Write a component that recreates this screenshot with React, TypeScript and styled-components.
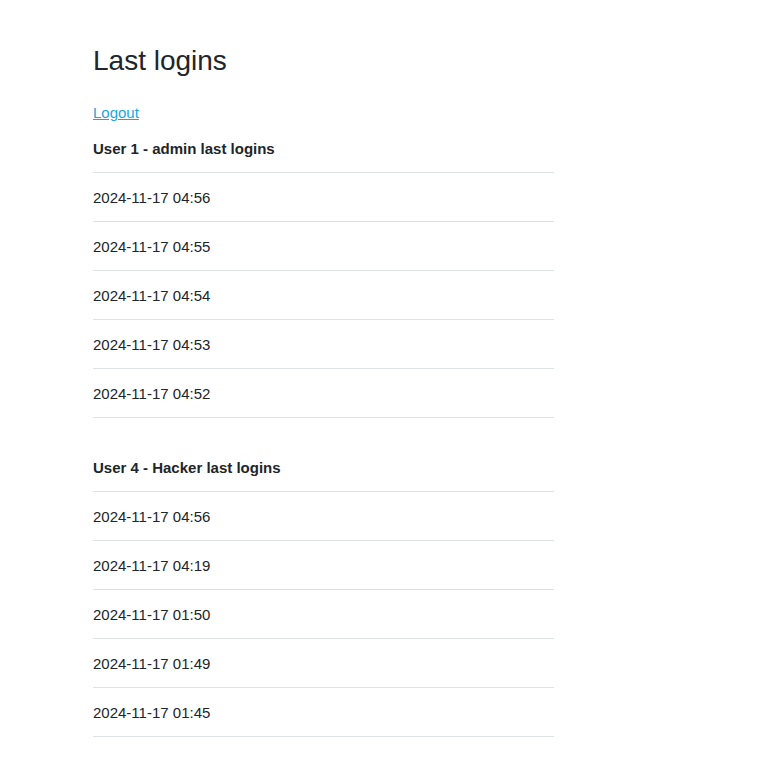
import React from "react";
import styled, { createGlobalStyle } from "styled-components";

const GlobalStyle = createGlobalStyle`
  html, body {
    margin: 0;
    padding: 0;
    background: #ffffff;
  }
  body {
    font-family: "Liberation Sans", Arial, Helvetica, sans-serif;
    font-size: 15px;
    line-height: 24px;
    color: #212529;
  }
  * { box-sizing: border-box; }
`;

const Page = styled.main`
  padding: 44px 0 0 93px;
  width: 554px;
`;

const Title = styled.h2`
  margin: 0 0 22px;
  font-size: 28px;
  font-weight: 400;
  line-height: 34px;
  color: #212529;
`;

const LogoutLink = styled.a`
  display: block;
  width: fit-content;
  padding-top: 1px;
  color: #1ba6dd;
  text-decoration: underline;
  line-height: 23px;
  cursor: pointer;
`;

const Table = styled.table`
  width: 461px;
  border-collapse: collapse;
  margin-bottom: 25px;

  &:last-child {
    margin-bottom: 0;
  }
`;

const HeadCell = styled.th`
  text-align: left;
  font-weight: 700;
  padding: 13px 0 11px;
  line-height: 24px;
  border-bottom: 1px solid #dee2e6;
`;

const Cell = styled.td`
  padding: 13px 0 11px;
  line-height: 24px;
  border-bottom: 1px solid #dee2e6;
`;

type LoginGroup = { title: string; times: string[] };

const groups: LoginGroup[] = [
  {
    title: "User 1 - admin last logins",
    times: [
      "2024-11-17 04:56",
      "2024-11-17 04:55",
      "2024-11-17 04:54",
      "2024-11-17 04:53",
      "2024-11-17 04:52",
    ],
  },
  {
    title: "User 4 - Hacker last logins",
    times: [
      "2024-11-17 04:56",
      "2024-11-17 04:19",
      "2024-11-17 01:50",
      "2024-11-17 01:49",
      "2024-11-17 01:45",
    ],
  },
];

export default function App() {
  return (
    <>
      <GlobalStyle />
      <Page>
        <Title>Last logins</Title>
        <LogoutLink href="#">Logout</LogoutLink>
        {groups.map((g) => (
          <Table key={g.title}>
            <thead>
              <tr>
                <HeadCell>{g.title}</HeadCell>
              </tr>
            </thead>
            <tbody>
              {g.times.map((t, i) => (
                <tr key={i}>
                  <Cell>{t}</Cell>
                </tr>
              ))}
            </tbody>
          </Table>
        ))}
      </Page>
    </>
  );
}
